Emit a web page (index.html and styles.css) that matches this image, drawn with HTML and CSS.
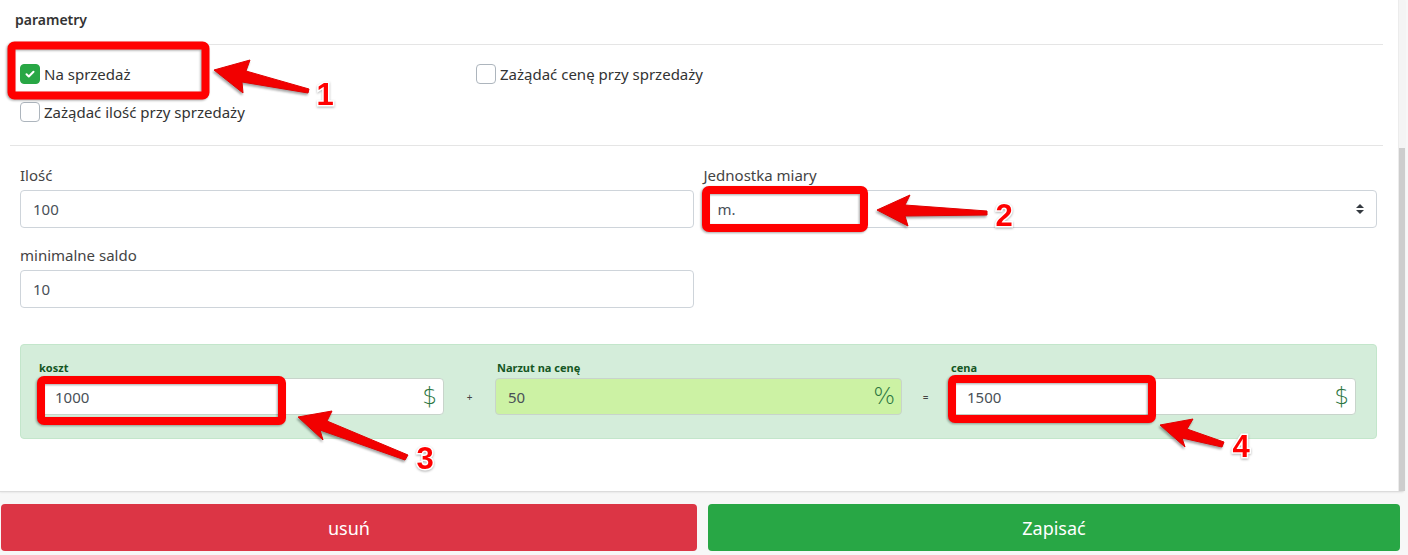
FILE: index.html
```html
<!DOCTYPE html>
<html lang="pl">
<head>
  <meta charset="UTF-8">
  <title>parametry</title>
  <link rel="stylesheet" href="styles.css">
</head>
<body>
  <div class="page">
    <div class="panel">
      <div class="panel-body">
        <div class="section">
          <div class="section-title">parametry</div>
          <div class="checks">
            <label class="check">
              <span class="box checked">
                <svg width="12" height="12" viewBox="0 0 12 12"><path d="M2.5 6.2l2.3 2.3 4.7-4.8" fill="none" stroke="#fff" stroke-width="2" stroke-linecap="round" stroke-linejoin="round"/></svg>
              </span>
              Na sprzedaż
            </label>
            <label class="check"><span class="box"></span>Zażądać cenę przy sprzedaży</label>
            <label class="check"><span class="box"></span>Zażądać ilość przy sprzedaży</label>
          </div>
        </div>

        <div class="fields">
          <div class="field">
            <label class="field-label">Ilość</label>
            <input class="form-input" value="100" readonly>
          </div>
          <div class="field">
            <label class="field-label">Jednostka miary</label>
            <div class="form-select">
              <span>m.</span>
              <svg width="8" height="10" viewBox="0 0 4 5"><path d="M2 0L0 2h4zm0 5L0 3h4z" fill="#343a40"/></svg>
            </div>
          </div>
          <div class="field">
            <label class="field-label">minimalne saldo</label>
            <input class="form-input" value="10" readonly>
          </div>
        </div>

        <div class="pricing">
          <div class="price-col">
            <div class="price-label">koszt</div>
            <div class="price-input">
              <input class="price-value" value="1000" readonly>
              <span class="price-unit">$</span>
            </div>
          </div>
          <div class="price-op">+</div>
          <div class="price-col">
            <div class="price-label">Narzut na cenę</div>
            <div class="price-input markup">
              <input class="price-value" value="50" readonly>
              <span class="price-unit">%</span>
            </div>
          </div>
          <div class="price-op">=</div>
          <div class="price-col">
            <div class="price-label">cena</div>
            <div class="price-input">
              <input class="price-value" value="1500" readonly>
              <span class="price-unit">$</span>
            </div>
          </div>
        </div>
      </div>
      <div class="scrollbar"><div class="scroll-thumb"></div></div>
    </div>

    <div class="actions">
      <button class="btn btn-danger">usuń</button>
      <button class="btn btn-success">Zapisać</button>
    </div>

    <svg class="annotations" width="1408" height="555" viewBox="0 0 1408 555">
      <g class="marks">
        <rect x="11.5" y="45.5" width="194" height="50" rx="3"/>
        <rect x="706" y="190" width="158" height="38" rx="3"/>
        <rect x="41" y="380" width="241" height="41" rx="3"/>
        <rect x="952" y="379" width="200" height="40" rx="3"/>
      </g>
      <g class="arrows">
        <polygon points="214,70 250,60 246,71 309,89 308,93 242,82 243,93"/>
        <polygon points="877,210 910,195 905,205 987,211 987,215 905,216 908,226"/>
        <polygon points="298,417 332,411 327,421 408,455 405,460 320,430 323,440"/>
        <polygon points="1160,425 1193,419 1187,429 1224,442 1222,447 1182,438 1185,447"/>
      </g>
      <g class="nums">
        <text x="325" y="105">1</text>
        <text x="1004" y="226">2</text>
        <text x="425" y="469">3</text>
        <text x="1241" y="457">4</text>
      </g>
    </svg>
  </div>
</body>
</html>
```

FILE: styles.css
```css
body { margin: 0; background: #f7f7f7; font-family: "Noto Sans", "Open Sans", Arial, sans-serif; color: #212529; }
.page { position: relative; width: 1408px; height: 555px; overflow: hidden; }

.panel { display: flex; width: 1405px; height: 491px; background: #fff; border-bottom: 1px solid #dcdcdc; border-radius: 0 0 4px 0; box-shadow: 0 1px 2px rgba(0,0,0,0.06); }
.panel-body { flex: 1; }
.scrollbar { width: 6px; background: #f4f4f4; border-left: 1px solid #ececec; }
.scroll-thumb { margin-top: 148px; height: 343px; background: #cdcdcd; }

.section { margin: 0 15px 0 10px; }
.section-title { font-size: 14px; font-weight: 600; color: #333; line-height: 20px; padding: 10px 5px 14px; border-bottom: 1px solid #e5e5e5; }
.checks { display: grid; grid-template-columns: 456px 1fr; row-gap: 18px; padding: 19px 10px 23px; border-bottom: 1px solid #e5e5e5; }
.check { display: flex; align-items: center; height: 20px; font-size: 15px; color: #333; gap: 4px; }
.box { display: flex; align-items: center; justify-content: center; width: 18px; height: 18px; border: 1px solid #adb5bd; border-radius: 4px; background: #fff; }
.box.checked { background: #28a745; border-color: #28a745; }

.fields { display: grid; grid-template-columns: 1fr 1fr; column-gap: 10px; row-gap: 15px; padding: 17px 21px 0 20px; }
.field-label { display: block; font-size: 15px; line-height: 24px; color: #444; margin-bottom: 3px; }
.form-input { display: block; box-sizing: border-box; width: 100%; height: 38px; padding: 0 12px; border: 1px solid #ced4da; border-radius: 4px; font-family: inherit; font-size: 15px; color: #495057; background: #fff; outline: none; }
.form-select { display: flex; align-items: center; justify-content: space-between; box-sizing: border-box; height: 38px; padding: 0 12px 0 13px; border: 1px solid #ced4da; border-radius: 4px; font-size: 15px; color: #495057; }

.pricing { display: grid; grid-template-columns: 1fr 51px 1fr 47px 1fr; margin: 36px 21px 0 20px; padding: 15px 20px 23px 16px; background: #d4edda; border: 1px solid #c3e6cb; border-radius: 4px; }
.price-label { font-size: 11px; font-weight: 700; color: #155724; line-height: 16px; margin-bottom: 2px; padding-left: 2px; }
.price-op { display: flex; align-items: center; justify-content: center; padding-top: 18px; font-size: 10px; color: #444; }
.price-input { display: flex; align-items: center; height: 37px; box-sizing: border-box; background: #fff; border: 1px solid #c8d4cb; border-radius: 4px; }
.price-input.markup { background: #ccf2a4; }
.price-value { flex: 1; min-width: 0; border: none; background: transparent; padding: 0 0 0 17px; font-family: inherit; font-size: 15px; color: #495057; outline: none; }
.markup .price-value { padding-left: 12px; }
.price-unit { padding-right: 6px; font-family: "DejaVu Sans", sans-serif; font-weight: 200; font-size: 23px; line-height: 1; color: #2a7540; }

.actions { display: grid; grid-template-columns: 696px 692px; column-gap: 11px; padding: 12px 0 0 1px; }
.btn { height: 47px; border: none; border-radius: 4px; color: #fff; font-family: inherit; font-size: 18px; cursor: pointer; }
.btn-danger { background: #dc3545; }
.btn-success { background: #28a745; }

.annotations { position: absolute; left: 0; top: 0; pointer-events: none; }
.marks rect { fill: none; stroke: #ff0000; stroke-width: 8px; filter: drop-shadow(-1px 1px 1px rgba(0,0,0,0.35)); }
.arrows polygon { fill: #f20000; stroke: #e00000; stroke-width: 1px; stroke-linejoin: round; filter: drop-shadow(-1px 2px 1px rgba(0,0,0,0.35)); }
.nums text { font-family: "Liberation Sans", Arial, sans-serif; font-size: 31px; font-weight: 700; fill: #ff0000; stroke: #fff; stroke-width: 3px; paint-order: stroke; text-anchor: middle; filter: drop-shadow(0 1px 1px rgba(0,0,0,0.3)); }
```
